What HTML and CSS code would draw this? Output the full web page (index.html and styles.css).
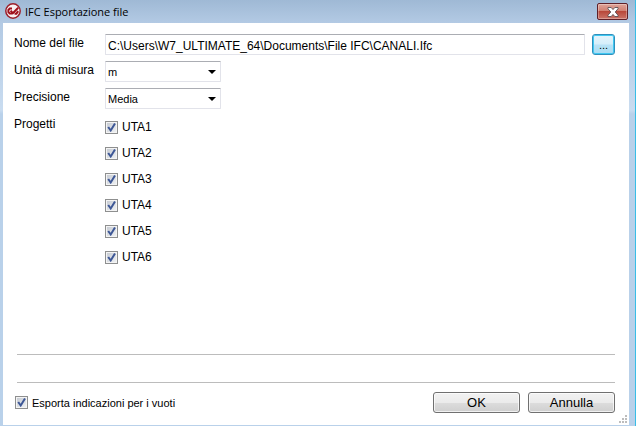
FILE: index.html
```html
<!DOCTYPE html>
<html lang="it">
<head>
    <meta charset="UTF-8" />
    <meta name="viewport" content="width=device-width, initial-scale=1.0"/>
    <title>IFC Esportazione file</title>
    <link rel="stylesheet" href="styles.css">
</head>
<body>
<main class="window">
    <header class="titlebar">
        <svg class="app-icon" viewBox="0 0 16 16" aria-hidden="true">
            <circle cx="8" cy="8" r="7.2" fill="#f8f0f1" stroke="#9c1f2a" stroke-width="1.5"/>
            <path d="M7 5.4H4.8L3.4 7v2l1.4 1.6H7" fill="none" stroke="#a0101c" stroke-width="2"/>
            <path d="M5.6 7.6l2.2 2.6 5.4-5.4M9.6 10.7h1.8l1.8-2.5" fill="none" stroke="#a0101c" stroke-width="2"/>
        </svg>
        <h1>IFC Esportazione file</h1>
        <button class="close-btn" type="button" aria-label="Chiudi">
            <svg viewBox="0 0 12 10" aria-hidden="true">
                <path d="M1 .5h3.2L6 2.6 7.8.5H11v1.3L8.2 5 11 8.2v1.3H7.8L6 7.4 4.2 9.5H1V8.2L3.8 5 1 1.8z" fill="#fff" stroke="#4d4449" stroke-width="0.8"/>
            </svg>
        </button>
    </header>

    <form class="dialog">
        <div class="fields">
            <label for="file-name">Nome del file</label>
            <div class="file-row">
                <input id="file-name" class="text-box" type="text" value="C:\Users\W7_ULTIMATE_64\Documents\File IFC\CANALI.Ifc">
                <button class="browse-btn" type="button" aria-label="Sfoglia">...</button>
            </div>

            <label for="unit">Unità di misura</label>
            <select id="unit" class="drop-down">
                <option>m</option>
            </select>

            <label for="precision">Precisione</label>
            <select id="precision" class="drop-down">
                <option>Media</option>
            </select>

            <span id="projects-label">Progetti</span>
            <div class="projects" role="group" aria-labelledby="projects-label">
                <label class="check"><input type="checkbox" checked>UTA1</label>
                <label class="check"><input type="checkbox" checked>UTA2</label>
                <label class="check"><input type="checkbox" checked>UTA3</label>
                <label class="check"><input type="checkbox" checked>UTA4</label>
                <label class="check"><input type="checkbox" checked>UTA5</label>
                <label class="check"><input type="checkbox" checked>UTA6</label>
            </div>
        </div>

        <div class="status"></div>

        <footer class="actions">
            <label class="check check-small"><input type="checkbox" checked>Esporta indicazioni per i vuoti</label>
            <button class="btn" type="submit">OK</button>
            <button class="btn" type="button">Annulla</button>
        </footer>

        <svg class="grip" viewBox="0 0 9 9" aria-hidden="true">
            <path d="M6 0h2v2H6zM3 3h2v2H3zM6 3h2v2H6zM0 6h2v2H0zM3 6h2v2H3zM6 6h2v2H6z" fill="#bdbdbd"/>
        </svg>
    </form>
</main>
</body>
</html>
```
FILE: styles.css
```css
* {
    box-sizing: border-box;
}
body {
    margin: 0;
    font-family: "Liberation Sans", Arial, sans-serif;
    font-size: 12px;
    color: #000;
}
button, input, select {
    margin: 0;
    font-family: inherit;
    color: inherit;
}
.window {
    display: flex;
    flex-direction: column;
    min-height: 100vh;
    padding: 0 6px 1px 3px;
    background: linear-gradient(#9fb9d5, #b3cae4 23px, #c9dcf0 110px, #b9d1ea 114px);
    border-right: 1px solid #38bde6;
}

/* Title bar */
.titlebar {
    display: flex;
    height: 23px;
    padding: 0 1px 0 2px;
}
.app-icon {
    width: 16px;
    height: 16px;
    margin-top: 3px;
}
.titlebar h1 {
    flex: 1;
    margin: 0 0 0 4px;
    font-family: "Open Sans", "Noto Sans", sans-serif;
    font-size: 11px;
    font-weight: normal;
    line-height: 23px;
}
.close-btn {
    display: flex;
    justify-content: center;
    align-items: center;
    width: 31px;
    height: 17px;
    margin-top: 3px;
    padding: 0;
    background: linear-gradient(#dfa499, #d08072 45%, #b8483a 50%, #cb7468);
    border: 1px solid #5f2028;
    border-radius: 2px;
    box-shadow: inset 0 0 0 1px rgba(255, 255, 255, 0.3);
}
.close-btn svg {
    width: 12px;
    height: 10px;
}

/* Dialog body */
.dialog {
    position: relative;
    flex: 1;
    display: flex;
    flex-direction: column;
    padding: 11px 14px 12px 11px;
    background: #fff;
}
.fields {
    display: grid;
    grid-template-columns: 91px 1fr;
    row-gap: 6px;
    line-height: 18px;
}
.file-row {
    display: flex;
    gap: 7px;
}
.text-box, .drop-down {
    height: 21px;
    border: 1px solid #e2e3ea;
    border-top-color: #abadb3;
    border-radius: 1px;
    background-color: #fff;
}
.text-box {
    flex: 1;
    min-width: 0;
    padding: 2px 2px 0;
    font-size: 12px;
}
.drop-down {
    width: 116px;
    padding: 0 20px 0 2px;
    appearance: none;
    font-size: 11px;
    background-image: url("data:image/svg+xml,%3Csvg xmlns='http://www.w3.org/2000/svg' viewBox='0 0 8 4'%3E%3Cpath d='M0 0h8L4 4z'/%3E%3C/svg%3E");
    background-repeat: no-repeat;
    background-position: right 4px center;
    background-size: 8px 4px;
}
.browse-btn {
    width: 23px;
    height: 21px;
    padding: 0;
    font-size: 11px;
    background: linear-gradient(#e6f5fc, #d5eefa 48%, #b9e2f6 52%, #a8dcf4);
    border: 1px solid #2f8fbc;
    border-radius: 3px;
    box-shadow: inset 0 0 0 1px #3fc8f2;
}
.projects {
    display: flex;
    flex-direction: column;
    gap: 8px;
    padding-top: 3px;
}

/* Check boxes */
.check {
    display: flex;
    align-items: center;
    gap: 4px;
    line-height: 18px;
}
.check input {
    width: 13px;
    height: 13px;
    appearance: none;
    border: 1px solid #8e8f8f;
    box-shadow: inset 0 0 0 1px #f4f4f4;
    background: linear-gradient(135deg, #c3c8d0, #f2f4f6);
}
.check input:checked {
    background:
        url("data:image/svg+xml,%3Csvg xmlns='http://www.w3.org/2000/svg' viewBox='0 0 11 11'%3E%3Cpath d='M2.2 5l2.5 3.5L9 1.5' fill='none' stroke='%233d5796' stroke-width='2'/%3E%3C/svg%3E") center / 11px 11px no-repeat,
        linear-gradient(135deg, #c3c8d0, #f2f4f6);
}
.check-small {
    font-size: 11px;
}

/* Bottom area */
.status {
    height: 29px;
    margin: auto 0 9px 3px;
    border: solid #bcbcbc;
    border-width: 1px 0;
}
.actions {
    display: flex;
    align-items: center;
    gap: 8px;
}
.actions .check {
    flex: 1;
    padding-left: 1px;
}
.btn {
    width: 87px;
    height: 21px;
    padding: 0;
    font-size: 13px;
    background: linear-gradient(#f2f2f2, #ebebeb 50%, #dddddd 50%, #cfcfcf);
    border: 1px solid #707070;
    border-radius: 3px;
    box-shadow: inset 0 0 0 1px rgba(255, 255, 255, 0.7);
}
.grip {
    position: absolute;
    right: 1px;
    bottom: 1px;
    width: 9px;
    height: 9px;
}
```
